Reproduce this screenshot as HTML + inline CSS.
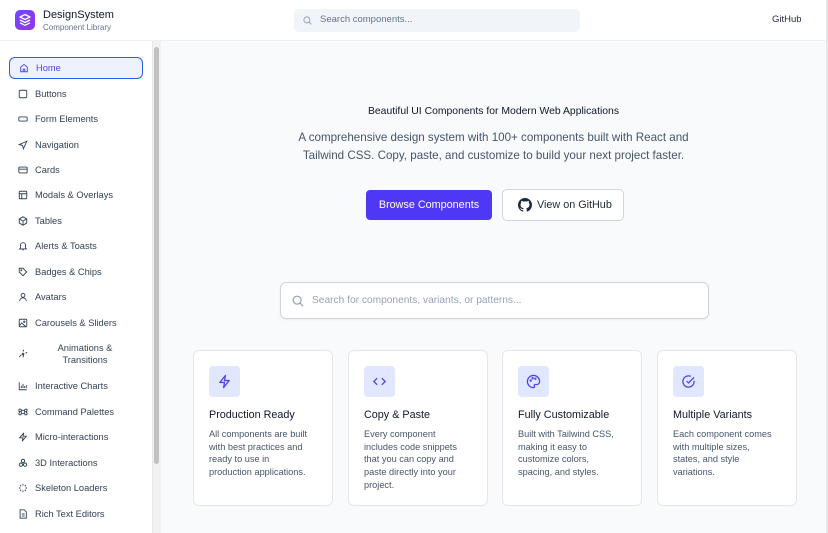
<!DOCTYPE html>
<html><head><meta charset="utf-8"><style>
*{box-sizing:border-box;margin:0;padding:0}
body{width:828px;height:533px;overflow:hidden;font-family:"Liberation Sans",sans-serif;background:#f8fafc;position:relative;color:#0f172a}
.hdr{position:absolute;left:0;top:0;width:826px;height:41px;background:#fff;border-bottom:1px solid #eef0f3}
.logo{position:absolute;left:15px;top:10px;width:20px;height:20px;border-radius:5px;background:linear-gradient(135deg,#6d4aff,#9333ea)}
.brand{position:absolute;left:43px;top:9px;font-size:11px;color:#0f172a}
.sub{position:absolute;left:43px;top:23px;font-size:8px;color:#64748b}
.search{position:absolute;left:294px;top:9px;width:286px;height:23px;border-radius:5px;background:#f1f5f9}
.search span{position:absolute;left:26px;top:5px;font-size:9.5px;color:#64748b}
.gh{position:absolute;left:772px;top:14px;font-size:9.5px;color:#1e293b}
.side{position:absolute;left:0;top:41px;width:153px;height:492px;background:#fff;border-right:1px solid #e5e7eb}
.sb{position:absolute;left:153px;top:41px;width:8px;height:492px;background:#f1f1f1}
.sb div{position:absolute;left:1px;top:6px;width:5px;height:417px;background:#c1c1c1;border-radius:3px}
.nav{position:absolute;left:9px;width:134px;height:22px;font-size:9.3px;color:#334155;display:flex;align-items:center}
.nav svg{position:absolute;left:9px;width:10px;height:10px}
.nav span{position:absolute;left:26px}
.nav.on{border:1.5px solid #2563eb;border-radius:6px;background:#eef2ff;color:#4f46e5}
.rb{position:absolute;left:826px;top:0;width:2px;height:533px;background:#e5e7eb}
.h1{position:absolute;left:161px;width:665px;text-align:center}
.btn1{position:absolute;left:366px;top:190px;width:126px;height:30px;background:#4f38f5;border-radius:4px;color:#fff;font-size:10.8px;text-align:center;line-height:30px}
.btn2{position:absolute;left:502px;top:189px;width:122px;height:32px;background:#fff;border:1px solid #d1d5db;border-radius:5px;color:#1e293b;font-size:10.8px;line-height:30px;padding-left:34px}
.big{position:absolute;left:280px;top:282px;width:429px;height:37px;background:#fff;border:1px solid #d1d5db;border-radius:6px;box-shadow:0 1px 2px rgba(0,0,0,.05)}
.big span{position:absolute;left:31px;top:12px;font-size:10.2px;color:#94a3b8}
.card{position:absolute;top:350px;width:140px;height:156px;background:#fff;border:1px solid #e5e7eb;border-radius:6px}
.ic{position:absolute;left:15px;top:15px;width:31px;height:31px;border-radius:4px;background:#e0e7ff;display:flex;align-items:center;justify-content:center}
.ct{position:absolute;left:15px;top:58px;font-size:10.8px;color:#0f172a}
.cd{position:absolute;left:15px;top:77px;width:102px;font-size:9.2px;line-height:12.7px;color:#475569}
</style></head><body>
<div class="hdr">
<div class="logo"><svg width="20" height="20" viewBox="0 0 20 20" fill="none" stroke="#fff" stroke-width="1.3" stroke-linejoin="round"><path d="M10 4.5l5 2.5-5 2.5-5-2.5z"/><path d="M5 10l5 2.5 5-2.5"/><path d="M5 12.8l5 2.5 5-2.5"/></svg></div>
<div class="brand">DesignSystem</div><div class="sub">Component Library</div>
<div class="search"><svg style="position:absolute;left:9px;top:7px" width="9" height="9" viewBox="0 0 10 10" fill="none" stroke="#94a3b8" stroke-width="1.1"><circle cx="4.3" cy="4.3" r="3.3"/><path d="M6.8 6.8l2.5 2.5"/></svg><span>Search components...</span></div>
<div class="gh">GitHub</div>
</div>
<div class="side"></div>
<div class="sb"><div></div></div>
<div class="rb"></div>
<div class="nav on" style="top:57px"><svg viewBox="0 0 12 12" fill="none" stroke="#4f46e5" stroke-width="1.1"><path d="M2 5l4-3.3L10 5v5.5H2z"/><path d="M5 10.5V7.5h2v3"/></svg><span>Home</span></div>
<div class="nav" style="top:83px"><svg viewBox="0 0 12 12" fill="none" stroke="#334155" stroke-width="1.1"><rect x="1.5" y="1.5" width="9" height="9" rx="1.5"/></svg><span>Buttons</span></div>
<div class="nav" style="top:108px"><svg viewBox="0 0 12 12" fill="none" stroke="#334155" stroke-width="1.1"><rect x="1" y="3.5" width="10" height="5" rx="1"/><path d="M3.5 6h.1M6 6h.1M8.5 6h.1"/></svg><span>Form Elements</span></div>
<div class="nav" style="top:134px"><svg viewBox="0 0 12 12" fill="none" stroke="#334155" stroke-width="1.1"><path d="M1.5 5.5L10.5 1.5 6.5 10.5 5.5 6.5z"/></svg><span>Navigation</span></div>
<div class="nav" style="top:159px"><svg viewBox="0 0 12 12" fill="none" stroke="#334155" stroke-width="1.1"><rect x="1" y="2.5" width="10" height="7" rx="1"/><path d="M1 5h10"/></svg><span>Cards</span></div>
<div class="nav" style="top:184px"><svg viewBox="0 0 12 12" fill="none" stroke="#334155" stroke-width="1.1"><rect x="1.5" y="1.5" width="9" height="9" rx="1"/><path d="M1.5 4.5h9M4.5 4.5v6"/></svg><span>Modals &amp; Overlays</span></div>
<div class="nav" style="top:210px"><svg viewBox="0 0 12 12" fill="none" stroke="#334155" stroke-width="1.1"><path d="M6 1l4.5 2.5v5L6 11 1.5 8.5v-5z"/><path d="M1.5 3.5L6 6l4.5-2.5M6 6v5"/></svg><span>Tables</span></div>
<div class="nav" style="top:235px"><svg viewBox="0 0 12 12" fill="none" stroke="#334155" stroke-width="1.1"><path d="M3 8.5V5a3 3 0 016 0v3.5l1 1H2z"/><path d="M5 10.5h2"/></svg><span>Alerts &amp; Toasts</span></div>
<div class="nav" style="top:261px"><svg viewBox="0 0 12 12" fill="none" stroke="#334155" stroke-width="1.1"><path d="M1.5 1.5h4.5l4.5 4.5-4.5 4.5-4.5-4.5z"/><circle cx="4" cy="4" r=".6"/></svg><span>Badges &amp; Chips</span></div>
<div class="nav" style="top:286px"><svg viewBox="0 0 12 12" fill="none" stroke="#334155" stroke-width="1.1"><circle cx="6" cy="4" r="2.3"/><path d="M2 11a4 4 0 018 0"/></svg><span>Avatars</span></div>
<div class="nav" style="top:312px"><svg viewBox="0 0 12 12" fill="none" stroke="#334155" stroke-width="1.1"><rect x="1.5" y="1.5" width="9" height="9" rx="1"/><path d="M1.5 9l3-3 5 4.5"/><circle cx="7.5" cy="4.5" r=".8"/></svg><span>Carousels &amp; Sliders</span></div>
<div class="nav" style="top:342px;height:24px"><svg viewBox="0 0 12 12" fill="none" stroke="#334155" stroke-width="1.1"><path d="M4 7l-2.5 2.5M6 3l1-2M9 5l2-1M7 6l-1 4"/><circle cx="6" cy="6" r="1"/></svg><span style="left:36px;width:80px;text-align:center;line-height:12.5px">Animations &amp; Transitions</span></div>
<div class="nav" style="top:375px"><svg viewBox="0 0 12 12" fill="none" stroke="#334155" stroke-width="1.1"><path d="M1.5 1.5v9h9M4 8.5v-3M6 8.5V3.5M8 8.5V6M10 8.5V5"/></svg><span>Interactive Charts</span></div>
<div class="nav" style="top:401px"><svg viewBox="0 0 12 12" fill="none" stroke="#334155" stroke-width="1.1"><path d="M4 4h4v4H4zM4 4a1.5 1.5 0 10-1.5 1.5H4M8 4a1.5 1.5 0 111.5 1.5H8M4 8a1.5 1.5 0 11-1.5-1.5M8 8a1.5 1.5 0 101.5-1.5"/></svg><span>Command Palettes</span></div>
<div class="nav" style="top:426px"><svg viewBox="0 0 12 12" fill="none" stroke="#334155" stroke-width="1.1"><path d="M7 1L2 7h4l-1 4 5-6H6z"/></svg><span>Micro-interactions</span></div>
<div class="nav" style="top:452px"><svg viewBox="0 0 12 12" fill="none" stroke="#334155" stroke-width="1.1"><circle cx="6" cy="3.5" r="2"/><circle cx="3.5" cy="8" r="2"/><circle cx="8.5" cy="8" r="2"/></svg><span>3D Interactions</span></div>
<div class="nav" style="top:477px"><svg viewBox="0 0 12 12" fill="none" stroke="#334155" stroke-width="1.1"><path d="M6 1v2M6 9v2M1 6h2M9 6h2M2.5 2.5l1.4 1.4M8.1 8.1l1.4 1.4M2.5 9.5l1.4-1.4M8.1 3.9l1.4-1.4"/></svg><span>Skeleton Loaders</span></div>
<div class="nav" style="top:503px"><svg viewBox="0 0 12 12" fill="none" stroke="#334155" stroke-width="1.1"><path d="M2.5 1h5l2.5 2.5V11h-7.5z"/><path d="M4.5 6h3.5M4.5 8.5h3.5"/></svg><span>Rich Text Editors</span></div>

<div class="h1" style="top:106px;font-size:10.4px;color:#0f172a">Beautiful UI Components for Modern Web Applications</div>
<div class="h1" style="top:129px;font-size:11.6px;line-height:18px;color:#475569">A comprehensive design system with 100+ components built with React and<br>Tailwind CSS. Copy, paste, and customize to build your next project faster.</div>
<div class="btn1">Browse Components</div>
<div class="btn2"><svg style="position:absolute;left:15px;top:8px" width="14" height="14" viewBox="0 0 16 16" fill="#1e293b"><path d="M8 0C3.58 0 0 3.58 0 8c0 3.54 2.29 6.53 5.47 7.59.4.07.55-.17.55-.38v-1.34c-2.23.48-2.7-1.070-2.7-1.07-.36-.92-.89-1.17-.89-1.17-.73-.5.05-.49.05-.49.8.06 1.23.83 1.23.83.71 1.23 1.87.87 2.33.67.07-.52.28-.87.5-1.07-1.78-.2-3.64-.89-3.64-3.95 0-.87.31-1.59.82-2.15-.08-.2-.36-1.02.08-2.12 0 0 .67-.21 2.2.82A7.7 7.7 0 018 3.86c.68 0 1.36.09 2 .27 1.53-1.04 2.2-.82 2.2-.82.44 1.1.16 1.92.08 2.12.51.56.82 1.27.82 2.15 0 3.07-1.87 3.75-3.65 3.95.29.25.54.73.54 1.48v2.2c0 .21.15.46.55.38A8 8 0 0016 8c0-4.42-3.58-8-8-8z"/></svg>View on GitHub</div>
<div class="big"><svg style="position:absolute;left:11px;top:12px" width="12" height="12" viewBox="0 0 10 10" fill="none" stroke="#94a3b8" stroke-width="1"><circle cx="4.3" cy="4.3" r="3.3"/><path d="M6.8 6.8l2.5 2.5"/></svg><span>Search for components, variants, or patterns...</span></div>

<div class="card" style="left:193px"><div class="ic"><svg width="15" height="15" viewBox="0 0 16 16" fill="none" stroke="#4f46e5" stroke-width="1.4" stroke-linejoin="round"><path d="M9 1.5L3 9h5l-1 5.5L13 7H8z"/></svg></div><div class="ct">Production Ready</div><div class="cd">All components are built with best practices and ready to use in production applications.</div></div>
<div class="card" style="left:348px"><div class="ic"><svg width="15" height="15" viewBox="0 0 16 16" fill="none" stroke="#4f46e5" stroke-width="1.4"><path d="M5.5 4.5L2 8l3.5 3.5M10.5 4.5L14 8l-3.5 3.5"/></svg></div><div class="ct">Copy &amp; Paste</div><div class="cd">Every component includes code snippets that you can copy and paste directly into your project.</div></div>
<div class="card" style="left:502px"><div class="ic"><svg width="15" height="15" viewBox="0 0 16 16" fill="none" stroke="#4f46e5" stroke-width="1.4"><path d="M8 1.5a6.5 6.5 0 000 13c1 0 1.3-.8.9-1.5-.5-.8 0-1.8 1-1.8h1.6a3 3 0 003-3C14.5 4.5 11.6 1.5 8 1.5z"/><circle cx="5" cy="7" r=".6"/><circle cx="7" cy="4.5" r=".6"/><circle cx="10" cy="5" r=".6"/></svg></div><div class="ct">Fully Customizable</div><div class="cd">Built with Tailwind CSS, making it easy to customize colors, spacing, and styles.</div></div>
<div class="card" style="left:657px"><div class="ic"><svg width="15" height="15" viewBox="0 0 16 16" fill="none" stroke="#4f46e5" stroke-width="1.4"><path d="M14 7.3V8a6 6 0 11-3.6-5.5"/><path d="M6 7.5l2 2 6-6"/></svg></div><div class="ct">Multiple Variants</div><div class="cd">Each component comes with multiple sizes, states, and style variations.</div></div>
</body></html>
